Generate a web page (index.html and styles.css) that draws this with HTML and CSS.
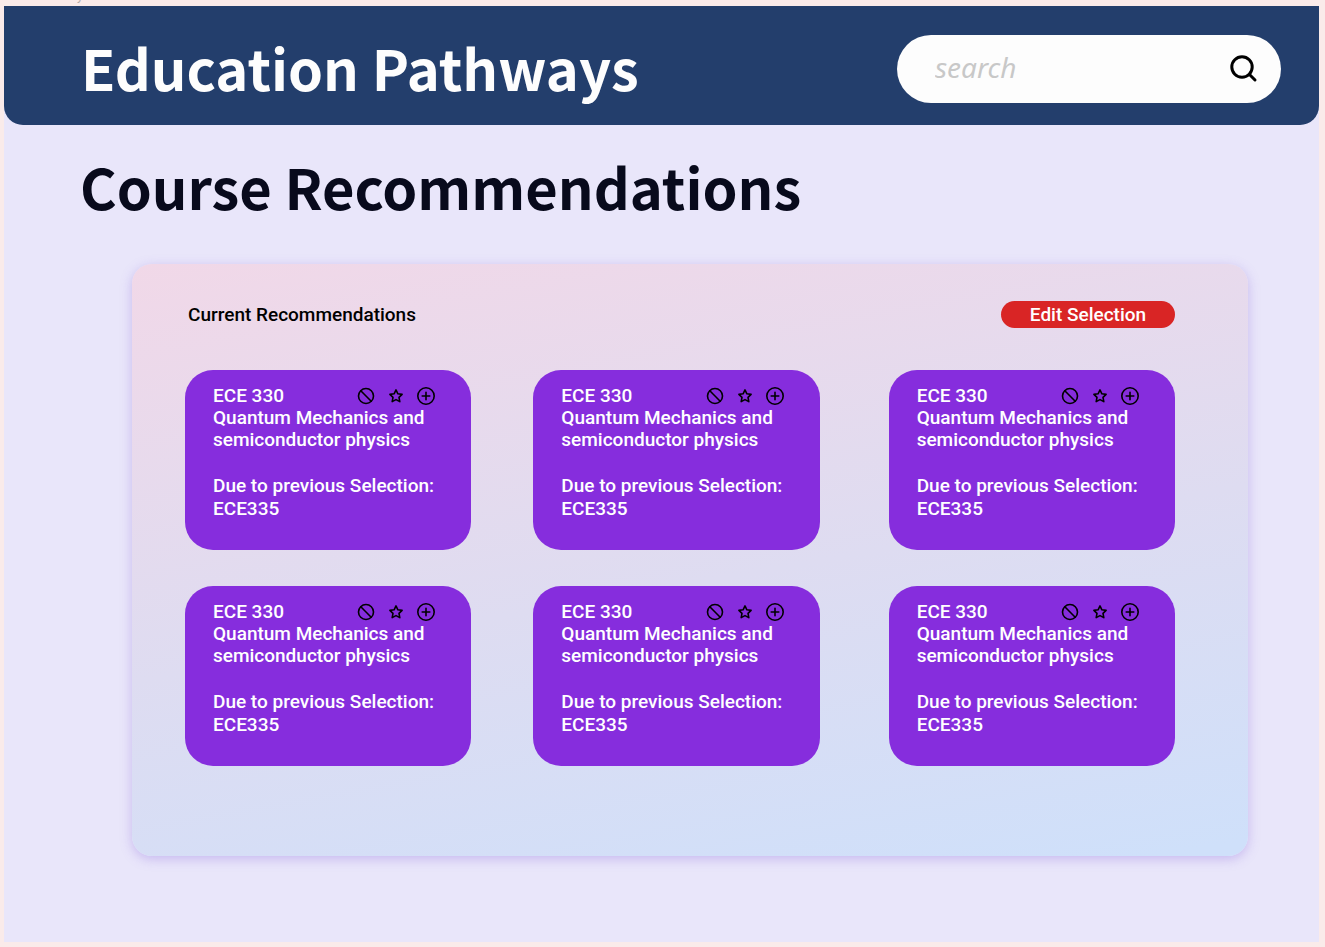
FILE: index.html
```
<!DOCTYPE html>
<html lang="en">
<head>
<meta charset="utf-8">
<meta name="viewport" content="width=device-width, initial-scale=1">
<title>Education Pathways</title>
<link rel="stylesheet" href="styles.css">
</head>
<body>
<svg class="sprite" aria-hidden="true">
  <symbol id="ban" viewBox="0 0 18 18"><circle cx="9" cy="9" r="7.5"/><path d="M3.8 3.8 14.2 14.2"/></symbol>
  <symbol id="star" viewBox="0 0 18 18"><path d="M9 2.9 10.9 6.8 15.1 7.4 12 10.4 12.8 14.6 9 12.6 5.2 14.6 6 10.4 2.9 7.4 7.1 6.8Z"/></symbol>
  <symbol id="plus" viewBox="0 0 18 18"><circle cx="9" cy="9" r="8.2"/><path d="M9 5.2V12.8M5.2 9H12.8"/></symbol>
</svg>
<span class="frame-label">y</span>
<div class="page">
  <header class="header">
    <div class="brand">Education Pathways</div>
    <form class="search" role="search">
      <input class="search-input" type="search" placeholder="search" aria-label="Search">
      <button class="search-button" type="button" aria-label="Submit search">
        <svg viewBox="0 0 30 30"><circle cx="13" cy="13" r="10.2"/><path d="M20.5 20.5 26 26"/></svg>
      </button>
    </form>
  </header>
  <main class="main">
    <h1 class="title">Course Recommendations</h1>
    <section class="panel">
      <div class="panel-head">
        <h2 class="panel-title">Current Recommendations</h2>
        <button class="edit" type="button">Edit Selection</button>
      </div>
      <div class="cards" id="cards"></div>
    </section>
  </main>
</div>
<script src="cards.js"></script>
</body>
</html>
```

FILE: cards.js
```
const course = {
  code: "ECE 330",
  name: "Quantum Mechanics and semiconductor physics",
  reason: "Due to previous Selection:",
  source: "ECE335"
};
const actions = [["ban", "Dismiss"], ["star", "Favourite"], ["plus", "Add"]];
const buttons = actions.map(([icon, label]) =>
  `<button class="action" type="button" aria-label="${label}"><svg><use href="#${icon}"/></svg></button>`).join("");

document.getElementById("cards").innerHTML = Array(6).fill(course).map(c => `
  <article class="card">
    <div class="card-head"><h3 class="code">${c.code}</h3><div class="actions">${buttons}</div></div>
    <p class="name">${c.name}</p>
    <p class="reason">${c.reason}<br>${c.source}</p>
  </article>`).join("");
```

FILE: styles.css
```
* { box-sizing: border-box; }

body {
  margin: 0;
  min-height: 100vh;
  display: flex;
  padding: 6px 6px 6px 4px;
  background: #faebea;
  color: #000;
  font-family: Roboto, sans-serif;
  font-size: 19px;
  font-weight: 500;
  line-height: 23px;
}

h1, h2, h3, p { margin: 0; font-size: inherit; font-weight: inherit; }

button { padding: 0; border: 0; background: none; color: inherit; font: inherit; cursor: pointer; }

svg { display: block; fill: none; stroke: #000; stroke-linecap: round; stroke-linejoin: round; }

.sprite { position: absolute; width: 0; height: 0; }

.frame-label {
  position: absolute;
  top: -12px;
  left: 77px;
  color: #b3a9a9;
  font-size: 13px;
  font-weight: 400;
  line-height: 16px;
}

.page { flex: 1; background: #e9e6fa; }

.header {
  display: flex;
  align-items: center;
  justify-content: space-between;
  gap: 32px;
  min-height: 119px;
  padding: 6px 38px 0 77px;
  border-radius: 0 0 19px 19px;
  background: #233e6c;
}

.brand, .title {
  font-family: "Noto Sans CJK JP", sans-serif;
  font-size: 56px;
  font-weight: 700;
  line-height: 72px;
}

.brand { padding-bottom: 4px; color: #fdfdfd; }

.search {
  display: flex;
  align-items: center;
  flex: 0 1 384px;
  min-width: 0;
  height: 68px;
  padding: 0 22px 0 38px;
  border-radius: 34px;
  background: #fdfdfd;
}

.search-input {
  flex: 1;
  min-width: 0;
  padding: 0 0 4px;
  border: 0;
  outline: 0;
  background: none;
  font: italic 400 28px "Noto Sans", sans-serif;
}

.search-input::placeholder { color: #c8c8c8; }

.search-button svg { width: 30px; height: 30px; stroke-width: 3; }

.main { padding: 25px 71px 86px 76px; }

.title { color: #080a1c; }

.panel {
  min-height: 592px;
  margin: 42px 0 0 52px;
  padding: 37px 73px 90px 53px;
  border-radius: 20px;
  background: linear-gradient(170deg, #f1d8e8 0%, #dedcf1 53%, #cfe0fa 98%);
  box-shadow: 0 3px 12px rgba(134, 100, 220, 0.35);
}

.panel-head { display: flex; align-items: center; justify-content: space-between; padding-left: 3px; }

.edit {
  width: 174px;
  height: 27px;
  border-radius: 14px;
  background: #d92525;
  color: #fff;
}

.cards {
  display: grid;
  grid-template-columns: 286fr 286fr 293fr;
  gap: 36px 62px;
  margin-top: 42px;
}

.card {
  min-height: 180px;
  padding: 14px 28px 28px;
  border-radius: 28px;
  background: #862ddd;
  color: #fff;
}

.card:nth-child(3n) { margin-left: 7px; }

.card-head { display: flex; align-items: center; justify-content: space-between; }

.actions { display: flex; gap: 12px; padding-right: 8px; }

.action svg { width: 18px; height: 18px; stroke-width: 1.6; }

.name { line-height: 22px; }

.reason { margin-top: 23px; white-space: nowrap; }
```
